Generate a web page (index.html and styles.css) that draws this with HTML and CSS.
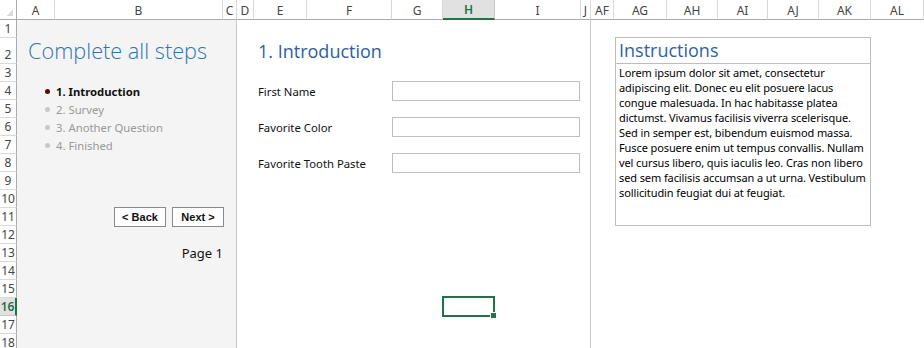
FILE: index.html
```html
<!DOCTYPE html>
<html lang="en">
<head>
    <meta charset="UTF-8">
    <title>Survey Wizard</title>
    <link rel="stylesheet" href="styles.css">
</head>
<body>
    <div class="sheet">
        <div class="corner"></div>
        <div class="col-head">A</div>
        <div class="col-head">B</div>
        <div class="col-head">C</div>
        <div class="col-head">D</div>
        <div class="col-head">E</div>
        <div class="col-head">F</div>
        <div class="col-head">G</div>
        <div class="col-head active">H</div>
        <div class="col-head">I</div>
        <div class="col-head">J</div>
        <div class="col-head">AF</div>
        <div class="col-head">AG</div>
        <div class="col-head">AH</div>
        <div class="col-head">AI</div>
        <div class="col-head">AJ</div>
        <div class="col-head">AK</div>
        <div class="col-head">AL</div>

        <div class="row-head">1</div>
        <div class="row-head">2</div>
        <div class="row-head">3</div>
        <div class="row-head">4</div>
        <div class="row-head">5</div>
        <div class="row-head">6</div>
        <div class="row-head">7</div>
        <div class="row-head">8</div>
        <div class="row-head">9</div>
        <div class="row-head">10</div>
        <div class="row-head">11</div>
        <div class="row-head">12</div>
        <div class="row-head">13</div>
        <div class="row-head">14</div>
        <div class="row-head">15</div>
        <div class="row-head active">16</div>
        <div class="row-head">17</div>
        <div class="row-head">18</div>

        <!-- left: wizard steps -->
        <div class="steps-panel"></div>
        <h1 class="steps-title">Complete all steps</h1>
        <ul class="steps">
            <li class="step current">1. Introduction</li>
            <li class="step">2. Survey</li>
            <li class="step">3. Another Question</li>
            <li class="step">4. Finished</li>
        </ul>
        <div class="nav-buttons">
            <button class="nav-button">&lt; Back</button>
            <button class="nav-button">Next &gt;</button>
        </div>
        <div class="page-number">Page 1</div>

        <!-- middle: form -->
        <div class="form-panel"></div>
        <h2 class="form-title">1. Introduction</h2>
        <label class="field-label row-4">First Name</label>
        <div class="field-input row-4"></div>
        <label class="field-label row-6">Favorite Color</label>
        <div class="field-input row-6"></div>
        <label class="field-label row-8">Favorite Tooth Paste</label>
        <div class="field-input row-8"></div>

        <div class="selection"></div>

        <!-- right: instructions -->
        <div class="instructions">
            <div class="instructions-title">Instructions</div>
            <p class="instructions-text">Lorem ipsum dolor sit amet, consectetur<br>adipiscing elit. Donec eu elit posuere lacus<br>congue malesuada. In hac habitasse platea<br>dictumst. Vivamus facilisis viverra scelerisque.<br>Sed in semper est, bibendum euismod massa.<br>Fusce posuere enim ut tempus convallis. Nullam<br>vel cursus libero, quis iaculis leo. Cras non libero<br>sed sem facilisis accumsan a ut urna. Vestibulum<br>sollicitudin feugiat dui at feugiat.</p>
        </div>
    </div>
</body>
</html>
```
FILE: styles.css
```css
body {
    margin: 0;
    background-color: #fff;
    font-family: "Noto Sans", "Open Sans", sans-serif;
    overflow: hidden;
}

.sheet {
    display: grid;
    grid-template-columns: 17px 38px 168px 14px 17px 53px 85px 51px 52px 86px 10px 23px 53px 51px 50px 51px 52px 1fr;
    grid-template-rows: 20px 18px 26px repeat(16, 18px);
    width: 924px;
    height: 348px;
    overflow: hidden;
}

.corner {
    border-right: 1px solid #ababab;
    border-bottom: 1px solid #ababab;
    background: linear-gradient(135deg, transparent 70%, #dcdcdc 70%) no-repeat right 3px bottom 3px / 10px 10px;
}

.col-head {
    display: flex;
    align-items: center;
    justify-content: center;
    padding-top: 1px;
    font-size: 12px;
    color: #444;
    border-right: 1px solid #dadada;
    border-bottom: 1px solid #ababab;
    overflow: hidden;
}

.col-head.active {
    background-color: #e1e1e1;
    color: #217346;
    font-weight: 600;
    border-bottom: 2px solid #217346;
    border-right-color: #c6c6c6;
}

.row-head {
    grid-column: 1;
    display: flex;
    align-items: flex-end;
    justify-content: center;
    font-size: 12px;
    line-height: 16px;
    color: #444;
    border-right: 1px solid #ababab;
    border-bottom: 1px solid #dadada;
}

.row-head.active {
    background-color: #e1e1e1;
    color: #217346;
    font-weight: 600;
    border-right: 2px solid #217346;
    border-bottom-color: #c6c6c6;
}

/* left panel */
.steps-panel {
    grid-column: 2 / 5;
    grid-row: 2 / -1;
    background-color: #f4f4f4;
    border-right: 1px solid #c6c6c6;
}

.steps-title {
    grid-column: 2 / 5;
    grid-row: 3;
    margin: 0;
    padding-left: 11px;
    font-family: "Open Sans", sans-serif;
    font-weight: 300;
    font-size: 21.7px;
    line-height: 26px;
    color: #2e74b5;
    white-space: nowrap;
}

.steps {
    grid-column: 2 / 4;
    grid-row: 5 / 9;
    list-style: none;
    margin: 0;
    padding: 0 0 0 28px;
}

.step {
    display: flex;
    align-items: center;
    gap: 6px;
    height: 18px;
    font-size: 11.3px;
    color: #999;
}

.step::before {
    content: "";
    width: 5px;
    height: 5px;
    border-radius: 50%;
    background-color: #c8c8c8;
}

.step.current {
    color: #111;
    font-weight: bold;
}

.step.current::before {
    background-color: #5a0a0a;
}

.nav-buttons {
    grid-column: 3 / 5;
    grid-row: 12;
    display: flex;
    justify-content: flex-end;
    align-items: center;
    gap: 6px;
    padding-right: 13px;
}

.nav-button {
    width: 52px;
    height: 20px;
    padding: 0;
    background-color: #fff;
    border: 1px solid #8a8a8a;
    font-family: "Liberation Sans", Arial, sans-serif;
    font-size: 11px;
    font-weight: bold;
    color: #111;
}

.page-number {
    grid-column: 3;
    grid-row: 14;
    justify-self: end;
    align-self: center;
    font-size: 13px;
    color: #111;
}

/* middle panel */
.form-panel {
    grid-column: 5 / 12;
    grid-row: 2 / -1;
    border-right: 1px solid #c6c6c6;
}

.form-title {
    grid-column: 6 / 10;
    grid-row: 3;
    margin: 0;
    padding-left: 4px;
    font-family: "Open Sans", sans-serif;
    font-weight: 400;
    font-size: 18px;
    line-height: 26px;
    color: #2b619c;
    white-space: nowrap;
}

.field-label {
    grid-column: 6 / 8;
    align-self: center;
    padding-left: 4px;
    font-size: 11.3px;
    color: #111;
    white-space: nowrap;
}

.field-input {
    grid-column: 8 / 11;
    align-self: center;
    height: 20px;
    margin-right: 1px;
    box-sizing: border-box;
    border: 1px solid #bdbdbd;
    background-color: #fff;
}

.row-4 { grid-row: 5; }
.row-6 { grid-row: 7; }
.row-8 { grid-row: 9; }

.selection {
    grid-column: 9;
    grid-row: 17;
    position: relative;
    margin: -2px 0 -1px -1px;
    border: 2px solid #217346;
}

.selection::after {
    content: "";
    position: absolute;
    right: -4px;
    bottom: -4px;
    width: 5px;
    height: 5px;
    background-color: #217346;
    border: 1px solid #fff;
}

/* right panel */
.instructions {
    grid-column: 13 / 18;
    grid-row: 3 / 13;
    margin-left: 1px;
    border: 1px solid #bdbdbd;
    margin-top: -1px;
}

.instructions-title {
    height: 25px;
    padding-left: 3px;
    border-bottom: 1px solid #bdbdbd;
    font-family: "Open Sans", sans-serif;
    font-size: 18px;
    line-height: 25px;
    color: #2e64a0;
}

.instructions-text {
    margin: 0;
    padding: 1px 3px;
    font-size: 11px;
    letter-spacing: -0.1px;
    line-height: 15px;
    color: #000;
    white-space: nowrap;
}
```
